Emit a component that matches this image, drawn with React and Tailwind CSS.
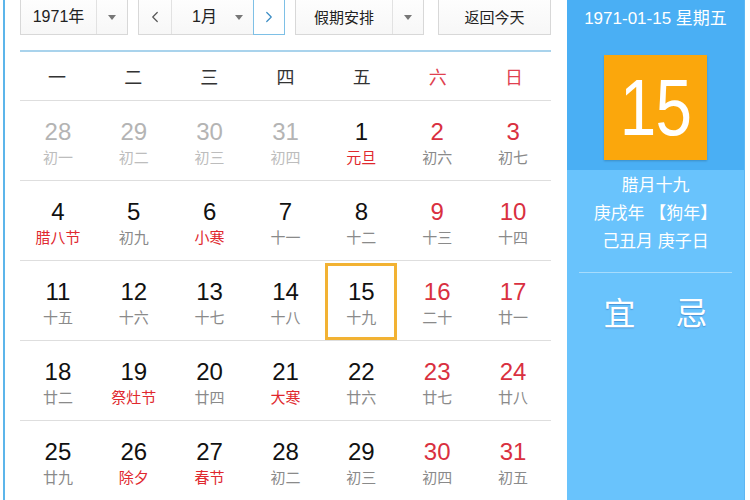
import { ChevronLeft, ChevronRight } from 'lucide-react';

const weekdays = ['一', '二', '三', '四', '五', '六', '日'];

// [day, lunar, prevMonth, lunarRed]
const weeks = [
  [[28, '初一', true], [29, '初二', true], [30, '初三', true], [31, '初四', true], [1, '元旦', false, true], [2, '初六'], [3, '初七']],
  [[4, '腊八节', false, true], [5, '初九'], [6, '小寒', false, true], [7, '十一'], [8, '十二'], [9, '十三'], [10, '十四']],
  [[11, '十五'], [12, '十六'], [13, '十七'], [14, '十八'], [15, '十九'], [16, '二十'], [17, '廿一']],
  [[18, '廿二'], [19, '祭灶节', false, true], [20, '廿四'], [21, '大寒', false, true], [22, '廿六'], [23, '廿七'], [24, '廿八']],
  [[25, '廿九'], [26, '除夕', false, true], [27, '春节', false, true], [28, '初二'], [29, '初三'], [30, '初四'], [31, '初五']],
];

const font = { fontFamily: '"Liberation Sans", Arial, "Noto Sans CJK SC", sans-serif' };
const cjk = { fontFamily: '"Noto Sans CJK SC", sans-serif' };

function Caret() {
  return <span className="inline-block w-0 h-0 border-l-[4px] border-r-[4px] border-t-[5px] border-l-transparent border-r-transparent border-t-[#777]" />;
}

function Cell({ day, lunar, prev, lunarRed, weekend, today }) {
  let numColor = 'text-[#111]';
  if (prev) numColor = 'text-[#b4b4b4]';
  else if (weekend) numColor = 'text-[#d9303f]';
  let lunarColor = 'text-[#8a8a8a]';
  if (prev) lunarColor = 'text-[#bdbdbd]';
  else if (lunarRed) lunarColor = 'text-[#e0282e]';
  return (
    <div className="flex justify-center h-[79px]">
      <div className={`flex flex-col items-center w-[72px] h-[77px] mt-[2px] ${today ? 'border-[3px] border-[#f2b233] pt-[12px]' : 'pt-[15px]'}`}>
        <span className={`text-[24px] leading-[28px] ${numColor}`}>{day}</span>
        <span className={`text-[15px] leading-[24px] ${lunarColor}`}>{lunar}</span>
      </div>
    </div>
  );
}

export default function App() {
  return (
    <div className="w-[750px] h-[500px] overflow-hidden bg-white flex" style={font}>
      <div className="ml-[3px] w-[2px] h-full bg-[#5cb5ea] shrink-0" />

      {/* calendar */}
      <div className="ml-[14px] w-[533px] shrink-0 flex flex-col">
        <div className="h-[50px] shrink-0 flex items-start">
          <div className="flex items-center h-[44px] -mt-[9px] gap-[10px] text-[16px] text-[#222]">
            <div className="flex h-full w-[108px] ml-[1px] border border-[#d8d8d8] bg-gradient-to-b from-white to-[#f7f7f7]">
              <div className="w-[76px] flex items-center justify-center pt-[8px] border-r border-[#e2e2e2]">1971年</div>
              <div className="flex-1 flex items-center justify-center pt-[8px]"><Caret /></div>
            </div>
            <div className="flex h-full w-[147px] border border-[#d8d8d8] bg-gradient-to-b from-white to-[#f7f7f7]">
              <div className="w-[33px] flex items-center justify-center pt-[8px] border-r border-[#e2e2e2] text-[#555]">
                <ChevronLeft size={18} strokeWidth={1.6} />
              </div>
              <div className="flex-1 flex items-center pl-[20px] pr-[10px] justify-between pt-[8px]">
                <span>1月</span>
                <Caret />
              </div>
              <div className="w-[32px] -my-[1px] -mr-[1px] flex items-center justify-center pt-[8px] border border-[#7ec0e6] text-[#3a8cc4] bg-white">
                <ChevronRight size={18} strokeWidth={1.6} />
              </div>
            </div>
            <div className="flex h-full w-[129px] border border-[#d8d8d8] bg-gradient-to-b from-white to-[#f7f7f7]">
              <div className="w-[97px] flex items-center justify-center pt-[8px] border-r border-[#e2e2e2]" style={{ ...cjk, fontSize: 15 }}>假期安排</div>
              <div className="flex-1 flex items-center justify-center pt-[8px]"><Caret /></div>
            </div>
            <div className="flex h-full w-[113px] ml-[4px] items-center justify-center pt-[8px] border border-[#d8d8d8] bg-gradient-to-b from-white to-[#f7f7f7]" style={{ ...cjk, fontSize: 15 }}>
              返回今天
            </div>
          </div>
        </div>
        <div className="h-[2px] shrink-0 bg-[#a9d3ec] mx-[1px]" />

        <div className="grid grid-cols-7 h-[48px] shrink-0 items-center text-[18px]" style={cjk}>
          {weekdays.map((w, i) => (
            <div key={w} className={`text-center ${i >= 5 ? 'text-[#e0414f]' : 'text-[#333]'}`}>{w}</div>
          ))}
        </div>

        {weeks.map((week, r) => (
          <div key={r} className="grid grid-cols-7 shrink-0 border-t border-[#dedede] mx-[1px]">
            {week.map(([day, lunar, prev, lunarRed], c) => (
              <Cell
                key={c}
                day={day}
                lunar={lunar}
                prev={prev}
                lunarRed={lunarRed}
                weekend={c >= 5}
                today={!prev && day === 15}
              />
            ))}
          </div>
        ))}
      </div>

      {/* side panel */}
      <div className="ml-[15px] w-[178px] shrink-0 h-full flex flex-col text-white border-r border-[#5db6f2]">
        <div className="h-[170px] shrink-0 bg-[#4aaff4] flex flex-col items-center">
          <div className="mt-[7px] text-[17px] leading-[24px]">1971-01-15 星期五</div>
          <div className="mt-[24px] w-[103px] h-[105px] bg-[#fba70c] flex items-center justify-center shadow-[0_1px_2px_rgba(0,0,0,0.2)]">
            <span className="text-[80px] leading-none scale-x-[0.82] tracking-[-1px]">15</span>
          </div>
        </div>
        <div className="flex-1 bg-[#69c3fc] flex flex-col items-center">
          <div className="mt-[2px] text-[17px] leading-[28px]">腊月十九</div>
          <div className="text-[17px] leading-[28px]">庚戌年 【狗年】</div>
          <div className="text-[17px] leading-[28px]">己丑月 庚子日</div>
          <div className="mt-[16px] w-[153px] h-[1px] bg-[#a6dcfd]" />
          <div className="mt-[18px] flex gap-[40px] text-[32px] leading-[40px] [text-shadow:0_1px_1px_rgba(40,100,180,0.5)]" style={cjk}>
            <span>宜</span>
            <span>忌</span>
          </div>
        </div>
      </div>
    </div>
  );
}
